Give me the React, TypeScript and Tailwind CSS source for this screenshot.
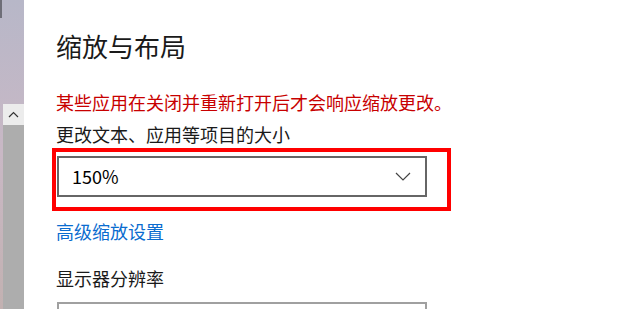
export default function App() {
  const font = { fontFamily: '"Noto Sans CJK SC", "Noto Sans", sans-serif' };
  return (
    <div className="flex w-[620px] h-[309px] overflow-hidden bg-white" style={font}>
      {/* left strip: blurred wallpaper + scrollbar */}
      <div className="relative w-[24px] h-full shrink-0 bg-gradient-to-b from-[#b7b7c8] via-[#c9b8c5] to-[#c2b1b1] flex flex-col pl-[3px]">
        <div className="absolute left-0 top-0 w-[2px] h-[18px] bg-[#6e6e78]" />
        <div className="h-[104px] shrink-0" />
        <div className="h-[21px] shrink-0 bg-[#ececec] flex items-center justify-center">
          <svg width="11" height="7" viewBox="0 0 11 7">
            <path d="M1 6 L5.5 1.5 L10 6" fill="none" stroke="#333" strokeWidth="1.2" />
          </svg>
        </div>
        <div className="flex-1 bg-[#adadad]" />
      </div>

      {/* content */}
      <div className="relative flex-1 flex flex-col pl-[32px] pt-[29px] [&>*]:shrink-0">
        <h1 className="text-[26px] leading-[34px] font-normal text-[#1a1a1a]">缩放与布局</h1>
        <p className="mt-[26px] text-[18px] leading-[26px] text-[#c80000]">
          某些应用在关闭并重新打开后才会响应缩放更改。
        </p>
        <p className="mt-[6px] text-[18px] leading-[26px] text-[#1a1a1a]">更改文本、应用等项目的大小</p>
        <div className="mt-[9px] ml-[1px] w-[370px] h-[41px] border-2 border-[#666666] flex items-center justify-between pl-[13px] pr-[14px]">
          <span className="text-[18px] text-black">150%</span>
          <svg width="16" height="9" viewBox="0 0 16 9">
            <path d="M1 1 L8 8 L15 1" fill="none" stroke="#444" strokeWidth="1.2" />
          </svg>
        </div>
        <a className="mt-[21px] text-[18px] leading-[26px] text-[#0a6ccf] w-fit">高级缩放设置</a>
        <p className="mt-[21px] text-[18px] leading-[26px] text-[#1a1a1a]">显示器分辨率</p>
        <div className="mt-[11px] ml-[1px] w-[370px] h-[41px] border-2 border-[#a0a0a0]" />

        {/* red annotation box */}
        <div className="absolute left-[28px] top-[148px] w-[399px] h-[63px] border-4 border-[#ff0000]" />
      </div>
    </div>
  );
}
